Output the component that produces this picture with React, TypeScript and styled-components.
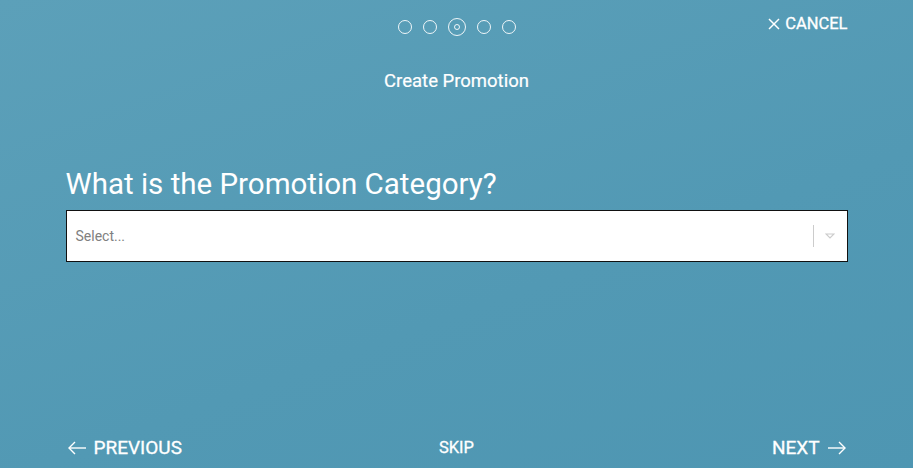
import styled, { createGlobalStyle } from 'styled-components';

const GlobalStyle = createGlobalStyle`
  html, body {
    margin: 0;
    padding: 0;
  }
  body {
    font-family: Roboto, "Liberation Sans", sans-serif;
  }
`;

const Page = styled.div`
  height: 468px;
  background: linear-gradient(160deg, #5ca0b9 0%, #5299b4 60%, #4e96b2 100%);
  color: #fff;
  display: flex;
  flex-direction: column;
  overflow: hidden;
`;

const Inner = styled.div`
  width: 782px;
  margin: 0 auto;
  flex: 1;
  display: flex;
  flex-direction: column;
`;

const TopBar = styled.div`
  display: grid;
  grid-template-columns: 1fr auto 1fr;
  align-items: start;
  padding-top: 16px;
  height: 22px;
`;

const Steps = styled.div`
  grid-column: 2;
  display: flex;
  align-items: center;
  gap: 11px;
  margin-top: 2px;
`;

const Dot = styled.span<{ $active?: boolean }>`
  box-sizing: border-box;
  width: ${(p) => (p.$active ? '18px' : '14px')};
  height: ${(p) => (p.$active ? '18px' : '14px')};
  border: 1.5px solid rgba(255, 255, 255, 0.9);
  border-radius: 50%;
  display: flex;
  align-items: center;
  justify-content: center;

  &::after {
    content: '';
    display: ${(p) => (p.$active ? 'block' : 'none')};
    box-sizing: border-box;
    width: 6px;
    height: 6px;
    border: 1.5px solid rgba(255, 255, 255, 0.9);
    border-radius: 50%;
  }
`;

const Cancel = styled.button`
  justify-self: end;
  background: none;
  border: none;
  color: #fff;
  font-family: inherit;
  font-size: 16.5px;
  font-weight: 400;
  -webkit-text-stroke: 0.3px #fff;
  line-height: 16px;
  padding: 0;
  display: flex;
  align-items: center;
  gap: 5px;
  cursor: pointer;
`;

const Title = styled.div`
  text-align: center;
  font-size: 18.5px;
  font-weight: 400;
  -webkit-text-stroke: 0.2px #fff;
  margin-top: 32px;
`;

const Question = styled.h2`
  font-size: 29.5px;
  font-weight: 400;
  margin: 0;
  margin-top: 75px;
  line-height: 34px;
`;

const SelectBox = styled.div`
  margin-top: 9px;
  height: 52px;
  box-sizing: border-box;
  background: #fff;
  border: 1px solid #111;
  display: flex;
  align-items: center;
  padding-left: 9px;
`;

const Placeholder = styled.span`
  flex: 1;
  color: #808080;
  font-size: 14px;
`;

const Separator = styled.span`
  width: 1px;
  height: 22px;
  background: #ccc;
`;

const Caret = styled.span`
  width: 33px;
  display: flex;
  justify-content: center;
`;

const Spacer = styled.div`
  flex: 1;
`;

const Footer = styled.div`
  display: grid;
  grid-template-columns: 1fr auto 1fr;
  align-items: center;
  padding-bottom: 9px;
`;

const NavButton = styled.button<{ $align?: 'start' | 'center' | 'end' }>`
  justify-self: ${(p) => p.$align ?? 'start'};
  background: none;
  border: none;
  color: #fff;
  font-family: inherit;
  font-size: 19px;
  font-weight: 400;
  -webkit-text-stroke: 0.3px #fff;
  padding: 0;
  display: flex;
  align-items: center;
  gap: 8px;
  cursor: pointer;
`;

const SkipButton = styled(NavButton)`
  font-size: 16.5px;
`;

const Arrow = ({ dir }: { dir: 'left' | 'right' }) => (
  <svg width="20" height="14" viewBox="0 0 20 14" fill="none" stroke="#fff" strokeWidth="1.4">
    {dir === 'left' ? (
      <>
        <line x1="3" y1="7" x2="20" y2="7" />
        <polyline points="9,1 3,7 9,13" />
      </>
    ) : (
      <>
        <line x1="0" y1="7" x2="17" y2="7" />
        <polyline points="11,1 17,7 11,13" />
      </>
    )}
  </svg>
);

export default function App() {
  return (
    <Page>
      <GlobalStyle />
      <Inner>
        <TopBar>
          <Steps>
            <Dot />
            <Dot />
            <Dot $active />
            <Dot />
            <Dot />
          </Steps>
          <Cancel>
            <svg width="12" height="12" viewBox="0 0 12 12" stroke="#fff" strokeWidth="1.5">
              <line x1="1" y1="1" x2="11" y2="11" />
              <line x1="11" y1="1" x2="1" y2="11" />
            </svg>
            CANCEL
          </Cancel>
        </TopBar>
        <Title>Create Promotion</Title>
        <Question>What is the Promotion Category?</Question>
        <SelectBox>
          <Placeholder>Select...</Placeholder>
          <Separator />
          <Caret>
            <svg width="10" height="6" viewBox="0 0 10 6" fill="none" stroke="#ccc" strokeWidth="1.2">
              <polygon points="1,1 9,1 5,5" />
            </svg>
          </Caret>
        </SelectBox>
        <Spacer />
        <Footer>
          <NavButton $align="start">
            <Arrow dir="left" />
            PREVIOUS
          </NavButton>
          <SkipButton $align="center">SKIP</SkipButton>
          <NavButton $align="end">
            NEXT
            <Arrow dir="right" />
          </NavButton>
        </Footer>
      </Inner>
    </Page>
  );
}
